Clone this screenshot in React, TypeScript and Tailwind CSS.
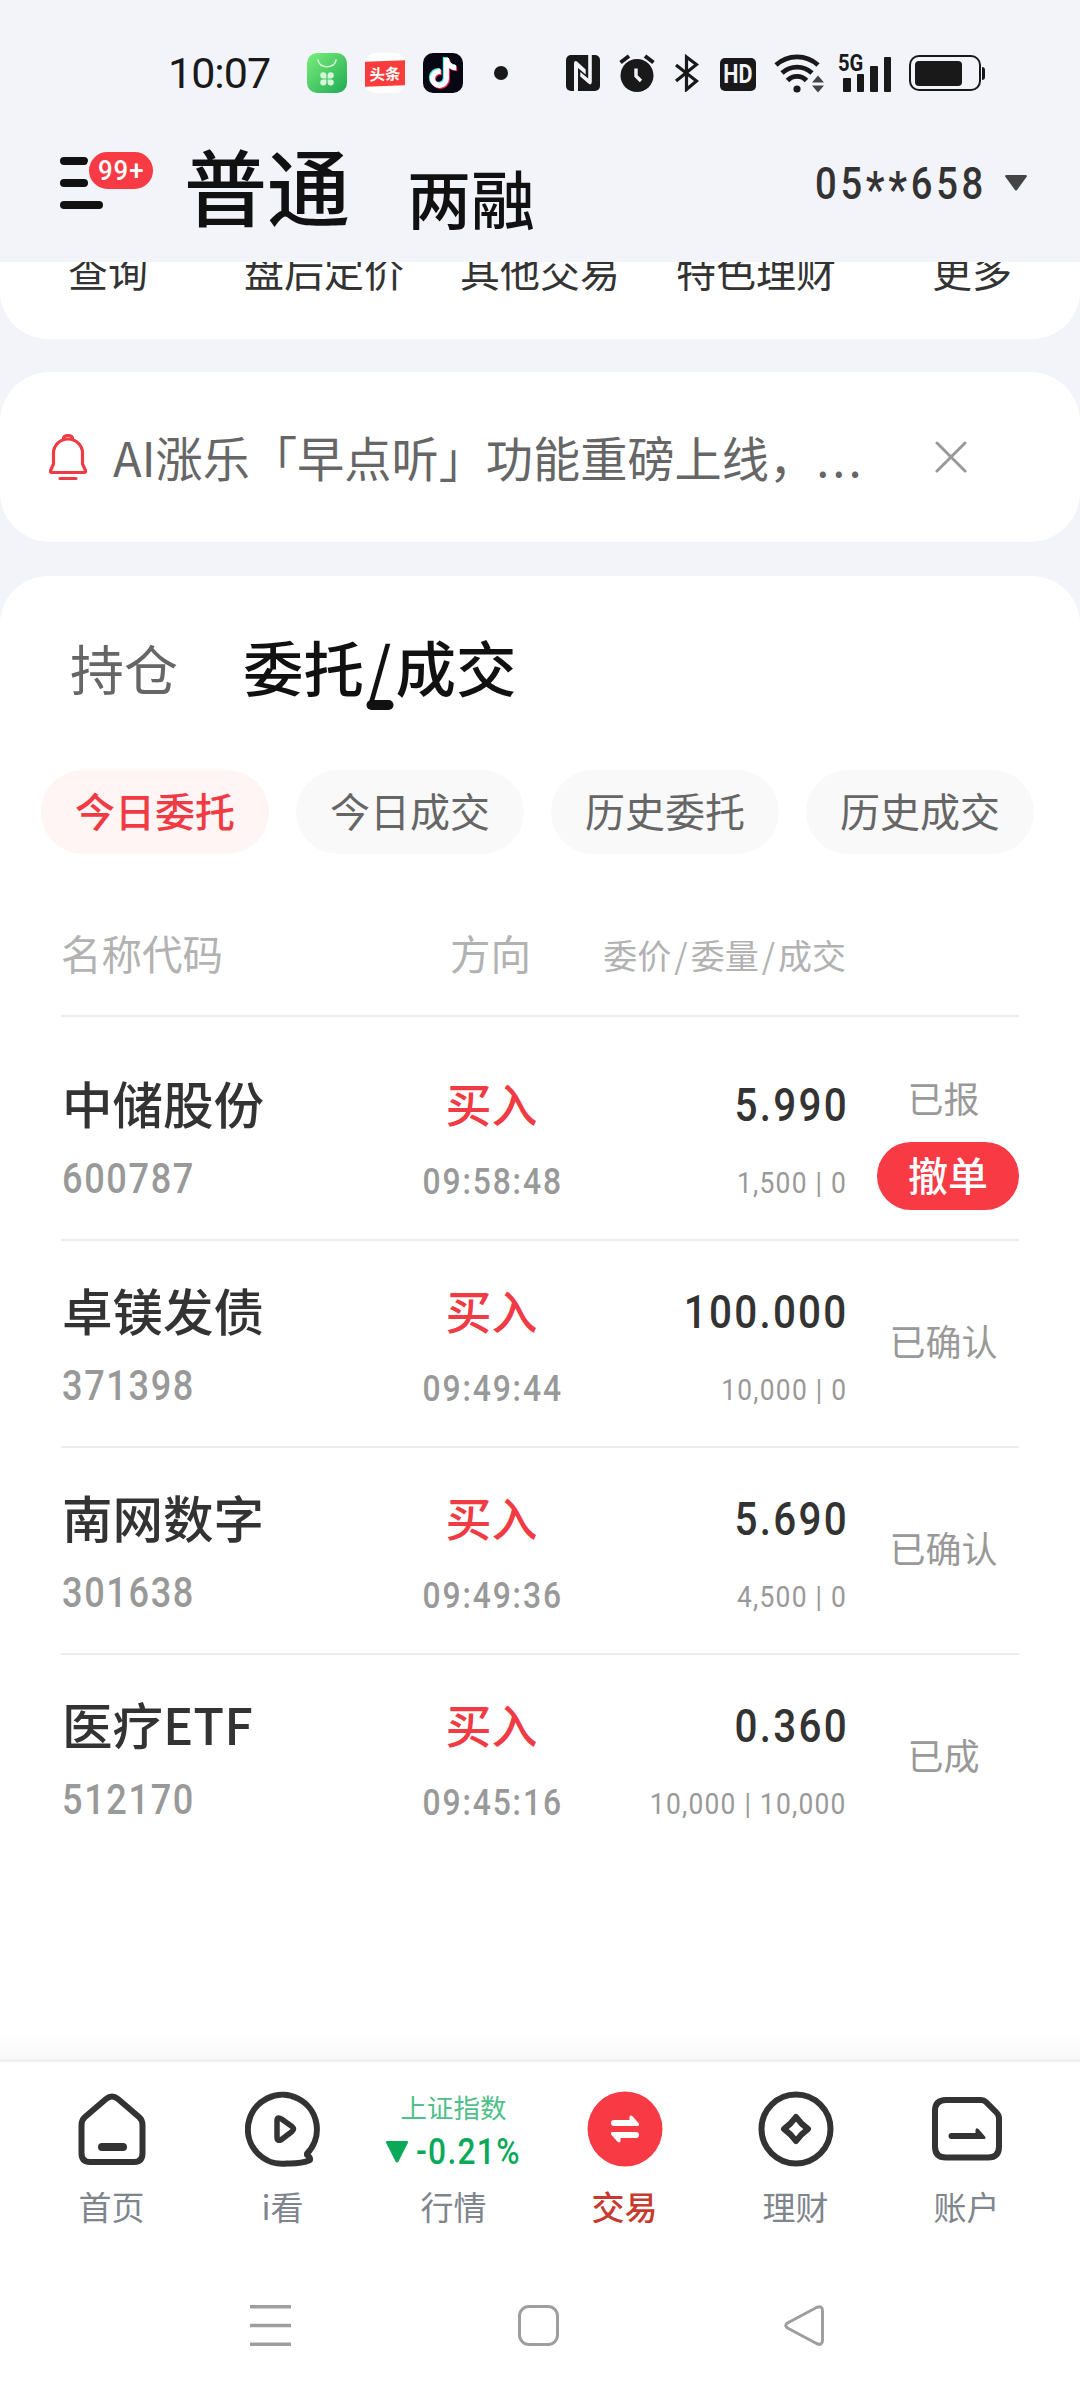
import React from 'react';
import { FaTiktok } from 'react-icons/fa6';

const quickLinks = ['查询', '盘后定价', '其他交易', '特色理财', '更多'];

const filters = ['今日委托', '今日成交', '历史委托', '历史成交'];

const orders = [
  { name: '中储股份', code: '600787', time: '09:58:48', price: '5.990', qty: '1,500 | 0', status: '已报', cancelable: true },
  { name: '卓镁发债', code: '371398', time: '09:49:44', price: '100.000', qty: '10,000 | 0', status: '已确认' },
  { name: '南网数字', code: '301638', time: '09:49:36', price: '5.690', qty: '4,500 | 0', status: '已确认' },
  { name: '医疗ETF', code: '512170', time: '09:45:16', price: '0.360', qty: '10,000 | 10,000', status: '已成' },
];

const StatusBar = () => (
  <div className="flex h-[146px] items-center pl-[168px] text-[#191919]">
    <span className="w-[139px] font-['Roboto'] text-[43px] leading-none tracking-[-1px]">10:07</span>
    <div className="flex items-center gap-[18px]">
      <svg className="h-10 w-10" viewBox="0 0 40 40">
        <defs>
          <linearGradient id="shop" x1="0" y1="0" x2="1" y2="1">
            <stop offset="0" stopColor="#7bee7b" />
            <stop offset="1" stopColor="#1faa55" />
          </linearGradient>
        </defs>
        <rect width="40" height="40" rx="10" fill="url(#shop)" />
        <path d="M11 7c1 9 17 9 18 0" fill="none" stroke="#dcfbdc" strokeWidth="1.6" strokeLinecap="round" />
        <g fill="#d4f7d8">
          <path d="M19.4 25.4h-3.2a3.1 3.1 0 1 1 3.2-3.2z" />
          <path d="M20.6 25.4h3.2a3.1 3.1 0 1 0-3.2-3.2z" />
          <path d="M19.4 26.4h-3.2a3.1 3.1 0 1 0 3.2 3.2z" />
          <path d="M20.6 26.4h3.2a3.1 3.1 0 1 1-3.2 3.2z" />
        </g>
      </svg>
      <div className="flex h-10 w-10 items-center justify-center rounded-[10px] bg-white">
        <div className="flex h-[25px] w-10 -skew-y-2 items-center justify-center bg-[#fa3c3c] text-[15.5px] leading-none font-bold text-white">
          头条
        </div>
      </div>
      <div className="relative h-10 w-10 rounded-[10px] bg-[#070714]">
        <FaTiktok className="absolute top-[4px] left-[5px] h-[30px] w-[28px] text-[#3ee8e8]" />
        <FaTiktok className="absolute top-[6px] left-[7px] h-[30px] w-[28px] text-[#f8305a]" />
        <FaTiktok className="absolute top-[5px] left-[6px] h-[30px] w-[28px] text-white" />
      </div>
    </div>
    <span className="ml-[31px] h-[14px] w-[14px] rounded-full bg-[#191919]" />

    {/* System indicators */}
    <svg className="ml-[58px] h-9 w-[34px]" viewBox="0 0 34 36">
      <rect width="34" height="36" rx="5" fill="#191919" />
      <g fill="#f3f4f9">
        <path d="M8 36V8Q8.500 5 11 6.500L19.700 14.500V19.500L12 13V36z" />
        <path d="M25.800 0V27Q25.500 30.500 23 29L14.300 21.500V17L22.200 23.500V0z" />
      </g>
    </svg>
    <svg className="ml-[19px] h-[38px] w-9" viewBox="0 0 36 38">
      <circle cx="18" cy="21.5" r="16.5" fill="#191919" />
      <path d="M1.5 8.5L10 2M34.5 8.5L26 2" stroke="#191919" strokeWidth="4" />
      <path d="M17 14.500v7.500l5 5" fill="none" stroke="#f3f4f9" strokeWidth="3.4" />
    </svg>
    <svg className="ml-5 h-[38px] w-6" viewBox="0 0 24 38">
      <path d="M1 11l20.500 16-10 8.500V3l10 7.500L1 27" fill="none" stroke="#191919" strokeWidth="3.200" />
    </svg>
    <div className="mt-[3px] ml-[21px] flex h-[33px] w-9 items-center justify-center rounded-[5px] bg-[#191919]">
      <span className="scale-x-[0.86] font-['Roboto'] text-[25px] leading-none font-bold text-[#f3f4f9]">HD</span>
    </div>
    <svg className="ml-[18px] h-10 w-[50px]" viewBox="0 0 50 40">
      <g fill="none" stroke="#191919" strokeWidth="4.8">
        <path d="M2 12a31 31 0 0 1 42 0" />
        <path d="M8 20a22 22 0 0 1 30 0" />
        <path d="M13.500 27.500a13 13 0 0 1 19 0" />
      </g>
      <circle cx="23" cy="36" r="3.6" fill="#191919" />
      <path d="M38 29.500l6-7 6 7zM38 32.500l6 7 6-7z" fill="#444" />
    </svg>
    <div className="relative ml-[14px] flex h-[38px] w-[54px] items-end gap-[6px] pl-[5px]">
      <span className="absolute top-[-1px] left-0 origin-left scale-x-[0.84] font-['Roboto'] text-[24px] leading-[20px] font-bold">5G</span>
      <span className="h-[14px] w-[7.500px] rounded-[1px] bg-[#191919]" />
      <span className="h-[18px] w-[7.500px] rounded-[1px] bg-[#191919]" />
      <span className="h-[26px] w-[7.500px] rounded-[1px] bg-[#191919]" />
      <span className="h-[35px] w-[7.500px] rounded-[1px] bg-[#191919]" />
    </div>
    <div className="ml-[17px] flex h-9 w-[72px] items-center rounded-[10px] border-[2.500px] border-[#191919] pl-1">
      <span className="h-[25px] w-[47px] rounded-[4px] bg-[#191919]" />
    </div>
    <span className="ml-px h-[13px] w-[3px] rounded-r bg-[#191919]" />
  </div>
);

const Header = () => (
  <header className="flex h-[116px] items-start text-[#111]">
    <div className="relative mt-[11px] ml-[60px] flex w-[43px] flex-col gap-[14px]">
      <span className="h-2 w-[28px] rounded-full bg-[#111]" />
      <span className="h-2 w-[28px] rounded-full bg-[#111]" />
      <span className="h-2 w-[43px] rounded-full bg-[#111]" />
      <span className="absolute top-[-8px] left-[26px] flex h-[43px] w-[70px] items-center justify-center rounded-full border-[3px] border-[#f3f4f9] bg-[#f73a44] font-['Roboto'] text-[28px] font-medium text-white">
        <span className="scale-x-[0.92] tracking-[1px]">99+</span>
      </span>
    </div>
    <h1 className="mt-[-4px] ml-[81px] text-[83px] leading-[84px] font-medium">普通</h1>
    <h2 className="mt-[18px] ml-[57px] text-[64px] leading-[64px] font-medium">两融</h2>
    <div className="mt-[11px] ml-auto flex items-center pr-[53px] text-[#333]">
      <span className="w-[169px] font-['Roboto'] text-[45px] leading-[50px] font-medium">
        <span className="inline-block origin-left scale-x-[0.85] tracking-[4.300px] whitespace-nowrap">
          05<span className="relative top-[8px] text-[50px] leading-none">**</span>658
        </span>
      </span>
      <svg className="ml-[21px] h-4 w-[22px]" viewBox="0 0 22 16">
        <path d="M1 0h20q1.500 .5 .5 2L12 15q-1 1.200-2 0L.5 2Q-.5 .5 1 0z" fill="#444" />
      </svg>
    </div>
  </header>
);

const Notice = () => (
  <div className="mt-[33px] flex h-[170px] items-center rounded-[50px] bg-white pl-[49px] text-[#666]">
    <svg className="h-[48px] w-[40px]" viewBox="0 0 40 48" fill="none" stroke="#f03a44" strokeWidth="3.200" strokeLinecap="round" strokeLinejoin="round">
      <path d="M4.500 31V20a14.500 14 0 0 1 29 0v11l3 6.500q.5 2-1.500 2h-32q-2 0-1.500-2z" />
      <path d="M14.500 6q0-3.500 4.500-3.500t4.500 3.500M11 45.500h16" />
    </svg>
    <p className="ml-[24px] flex w-[746px] text-[47.200px] leading-[60px] whitespace-nowrap">
      AI涨乐「早点听」功能重磅上线，
      <span className="tracking-[3px]">...</span>
    </p>
    <svg className="ml-[76px] h-8 w-8" viewBox="0 0 32 32" stroke="#999" strokeWidth="3" strokeLinecap="round">
      <path d="M2 2l28 28M30 2L2 30" />
    </svg>
  </div>
);

const OrderRow = ({ order }: { order: (typeof orders)[number] }) => (
  <div className="flex h-[207px] border-b-2 border-[#ededed] last:border-transparent">
    <div className="w-[340px]">
      <div className="mt-[36px] ml-px text-[50.500px] leading-[64px] font-medium text-[#333]">{order.name}</div>
      <div className="mt-[20px] ml-[1px] h-[50px] origin-left scale-x-[0.86] font-['Roboto'] text-[42px] leading-[50px] font-medium tracking-[1.900px] text-[#999]">
        {order.code}
      </div>
    </div>
    <div className="flex w-[181px] flex-col items-center whitespace-nowrap">
      <div className="mt-[36px] text-[46px] leading-[64px] font-medium text-[#f03a44]">买入</div>
      <div className="mt-[23px] ml-[2px] scale-x-[0.86] font-['Roboto'] text-[37px] leading-[50px] font-medium tracking-[2.200px] text-[#999]">
        {order.time}
      </div>
    </div>
    <div className="flex w-[264px] flex-col items-end font-['Roboto'] whitespace-nowrap">
      <div className="mt-[41px] mr-[-3px] origin-right scale-x-[0.86] text-[47px] leading-[60px] font-medium tracking-[2.600px] text-[#333]">
        {order.price}
      </div>
      <div className="mt-[23px] mr-[-1px] origin-right scale-x-[0.88] text-[30px] leading-[50px] tracking-[1.400px] text-[#999]">{order.qty}</div>
    </div>
    <div className="ml-[27px] flex w-[146px] flex-col items-center text-[36px] leading-[50px] text-[#999]">
      <div className={order.cancelable ? 'mt-[38px] pr-[5px]' : 'mt-[74px] pr-[5px]'}>{order.status}</div>
      {order.cancelable && (
        <button className="mt-[20px] flex h-[68px] w-[142px] items-center justify-center self-end rounded-full bg-[#f73a44] pb-1 text-[40px] font-medium text-white">
          撤单
        </button>
      )}
    </div>
  </div>
);

const Orders = () => (
  <section className="mt-[34px] h-[1483px] rounded-t-[48px] bg-white">
    <div className="flex pt-[48px]">
      <span className="mt-[8px] ml-[70px] text-[54px] leading-[72px] text-[#666]">持仓</span>
      <span className="relative ml-[65px] text-[60.500px] leading-[84px] font-medium text-[#111]">
        委托<span className="mx-[4px]">/</span>成交
        <span className="absolute bottom-[-2px] left-1/2 h-[10px] w-[27px] -translate-x-1/2 rounded-full bg-[#111]" />
      </span>
    </div>
    <div className="mt-[62px] flex gap-[27px] px-[41px]">
      {filters.map((label, i) => (
        <button
          key={label}
          className={
            i === 0
              ? 'h-[84px] w-[228px] rounded-full bg-[#fff5f4] pb-1 text-[40px] font-medium text-[#f03a44]'
              : 'h-[84px] w-[228px] rounded-full bg-[#f9f9f9] pb-1 text-[40px] text-[#666]'
          }
        >
          {label}
        </button>
      ))}
    </div>
    <div className="mx-[61px] flex h-[163px] items-center border-b-2 border-[#ededed] pt-[38px] text-[#b2b2b2]">
      <span className="w-[340px] text-[40.500px]">名称代码</span>
      <span className="w-[179px] text-center text-[40.500px]">方向</span>
      <span className="w-[266px] pt-px text-right text-[34px]">
        委价<span className="mx-[3px]">/</span>委量<span className="mx-[3px]">/</span>成交
      </span>
    </div>
    <div className="mx-[61px] pt-[17px]">
      {orders.map((order) => (
        <OrderRow key={order.code} order={order} />
      ))}
    </div>
  </section>
);

const iconProps = {
  className: 'h-[76px] w-[76px]',
  viewBox: '0 0 76 76',
  fill: 'none',
  stroke: '#333',
  strokeWidth: 6,
  strokeLinecap: 'round' as const,
  strokeLinejoin: 'round' as const,
};

const HomeIcon = () => (
  <svg {...iconProps}>
    <path d="M7.500 34Q7.500 29 11 26L32 8Q38 3 44 8L65 26Q68.500 29 68.500 34V62Q68.500 71 60 71H16Q7.500 71 7.500 62Z" />
    <path d="M28 56H49" strokeWidth="8" />
  </svg>
);

const WatchIcon = () => (
  <svg {...iconProps}>
    <path d="M62 62.500A34.500 34.500 0 1 0 42 72.500Q56 73 65 69Q65.500 66 62 64Z" />
    <path d="M32 30Q32 25 36.500 28L47 35.500Q50 38 47 40.500L36.500 48.500Q32 51 32 46Z" strokeWidth="5.500" />
  </svg>
);

const TradeIcon = () => (
  <svg {...iconProps} stroke="none">
    <circle cx="38" cy="38" r="37.500" fill="#f73a44" />
    <path id="half" d="M27 29H42.500V26Q43 23.500 45.500 25.200L51.500 32Q53 35 50.500 35H27A3 3 0 0 1 27 29Z" fill="#fff" />
    <use href="#half" transform="rotate(180 38 38)" />
  </svg>
);

const WealthIcon = () => (
  <svg {...iconProps}>
    <circle cx="38" cy="38" r="34.500" />
    <path d="M38 26Q43 33 50 38Q43 43 38 50Q33 43 26 38Q33 33 38 26Z" strokeWidth="6" />
  </svg>
);

const AccountIcon = () => (
  <svg {...iconProps}>
    <path d="M17 9H52Q55 9 57 11L67 21Q70 24 70 27V55.500Q70 66.500 59 66.500H17Q6 66.500 6 55.500V20Q6 9 17 9Z" />
    <path d="M22.500 42H46.500V39Q47 36 49.500 38L56 45.500Q57.500 48 55 48H22.500A3 3 0 0 1 22.500 42Z" fill="#333" stroke="none" />
  </svg>
);

const MarketTicker = () => (
  <div className="flex h-[76px] flex-col items-center whitespace-nowrap">
    <span className="text-[26.500px] leading-[32px] text-[#4fc08a]">上证指数</span>
    <span className="mt-[9px] flex items-center text-[#0aa95a]">
      <svg className="h-[22px] w-[22px]" viewBox="0 0 22 22">
        <path d="M1 0h20q1.500 .5 .8 2L12.500 20.500q-1.500 2-3 0L.2 2Q-.5 .5 1 0z" fill="#0aa95a" />
      </svg>
      <span className="w-[113px] pl-[8px] font-['Roboto'] text-[36px] leading-[40px] font-medium">
        <span className="inline-block origin-left scale-x-[0.88] tracking-[1.500px]">-0.21%</span>
      </span>
    </span>
  </div>
);

const tabs = [
  { label: '首页', icon: <HomeIcon /> },
  { label: 'i看', icon: <WatchIcon /> },
  { label: '行情', icon: <MarketTicker /> },
  { label: '交易', icon: <TradeIcon />, active: true },
  { label: '理财', icon: <WealthIcon /> },
  { label: '账户', icon: <AccountIcon /> },
];

const TabBar = () => (
  <nav className="relative grid h-[203px] grid-cols-6 border-t-[3px] border-[#efefef] bg-white pt-[29px] pr-[28px] pl-[26px]">
    <div className="absolute top-[-33px] left-0 h-[30px] w-full bg-gradient-to-b from-white to-[#f9f9f9]" />
    {tabs.map((tab) => (
      <div key={tab.label} className="flex flex-col items-center">
        {tab.icon}
        <span className={tab.active ? 'mt-[17px] text-[33px] leading-[44px] font-medium text-[#c73a30]' : 'mt-[17px] text-[33px] leading-[44px] text-[#7f858d]'}>
          {tab.label}
        </span>
      </div>
    ))}
  </nav>
);

const SystemNav = () => (
  <div className="flex h-[138px] items-start bg-white pt-[42px] pl-[250px]">
    <svg className="h-[43px] w-[41px]" viewBox="0 0 41 43" stroke="#9e9e9e" strokeWidth="3.400">
      <path d="M0 2.700h41M0 21.500h41M0 40.200h41" />
    </svg>
    <span className="mt-px ml-[227px] h-[41px] w-[41px] rounded-[11px] border-[3px] border-[#9e9e9e]" />
    <svg className="mt-px ml-[225px] h-[41px] w-[41px]" viewBox="0 0 41 41" fill="none" stroke="#9e9e9e" strokeWidth="3">
      <path d="M3.500 18L32.500 2.500Q38.500 0 38.500 6V35Q38.500 41 32.500 38.500L3.500 23Q0 20.500 3.500 18Z" />
    </svg>
  </div>
);

export default function App() {
  return (
    <div className="h-[2400px] w-[1080px] overflow-hidden bg-[#f3f4f9] font-['Noto_Sans_CJK_SC',sans-serif]">
      <StatusBar />
      <Header />
      <div className="grid h-[77px] grid-cols-5 overflow-hidden rounded-b-[48px] bg-white text-center text-[40px] leading-[60px] text-[#333]">
        {quickLinks.map((label) => (
          <span key={label} className="mt-[-22px]">{label}</span>
        ))}
      </div>
      <Notice />
      <Orders />
      <TabBar />
      <SystemNav />
    </div>
  );
}
